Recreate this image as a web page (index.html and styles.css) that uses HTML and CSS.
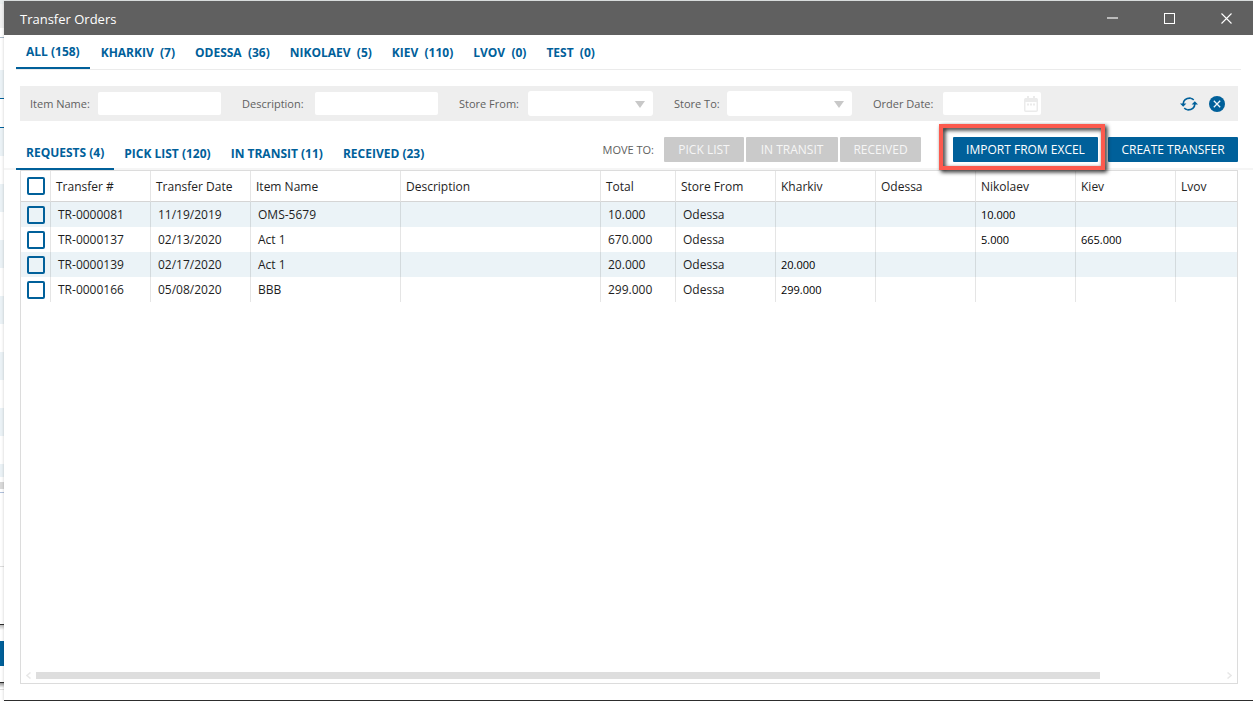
FILE: index.html
```html
<!DOCTYPE html>
<html lang="en">
<head>
<meta charset="utf-8">
<title>Transfer Orders</title>
<link rel="stylesheet" href="styles.css">
</head>
<body>
<main class="window">
  <header class="titlebar">
    <h1 class="title">Transfer Orders</h1>
    <div class="window-controls">
      <button class="control" aria-label="Minimize"><svg width="11" height="11" viewBox="0 0 11 11"><path d="M0 5H11" stroke="#bbb" stroke-width="2"/></svg></button>
      <button class="control" aria-label="Maximize"><svg width="11" height="11" viewBox="0 0 11 11"><rect x=".5" y=".5" width="10" height="10" fill="none" stroke="#fff"/></svg></button>
      <button class="control" aria-label="Close"><svg width="11" height="11" viewBox="0 0 11 11"><path d="M.5.5l10 10M10.500.5l-10 10" stroke="#fff" stroke-width="1.100"/></svg></button>
    </div>
  </header>

  <nav class="tabs store-tabs" aria-label="Stores">
    <a class="tab active" href="#all">ALL (158)</a>
    <a class="tab" href="#kharkiv">KHARKIV  (7)</a>
    <a class="tab" href="#odessa">ODESSA  (36)</a>
    <a class="tab" href="#nikolaev">NIKOLAEV  (5)</a>
    <a class="tab" href="#kiev">KIEV  (110)</a>
    <a class="tab" href="#lvov">LVOV  (0)</a>
    <a class="tab" href="#test">TEST  (0)</a>
  </nav>

  <form class="filters">
    <div class="field"><label class="label-item" for="item">Item Name:</label><input class="box" id="item" type="text"></div>
    <div class="field"><label class="label-desc" for="desc">Description:</label><input class="box" id="desc" type="text"></div>
    <div class="field"><label class="label-from" for="from">Store From:</label>
      <span class="picker"><select class="box select" id="from"><option></option></select><svg class="arrow" width="10" height="7" viewBox="0 0 10 7"><path d="M0 0H10L5 7Z" fill="#c8c8c8"/></svg></span></div>
    <div class="field"><label class="label-to" for="to">Store To:</label>
      <span class="picker"><select class="box select" id="to"><option></option></select><svg class="arrow" width="10" height="7" viewBox="0 0 10 7"><path d="M0 0H10L5 7Z" fill="#c8c8c8"/></svg></span></div>
    <div class="field"><label class="label-date" for="date">Order Date:</label>
      <span class="picker"><input class="box date" id="date" type="text"><svg class="calendar" width="14" height="16" viewBox="0 0 14 16"><path d="M1 2h12v4H1zM3 0h2v3H3zM9 0h2v3H9z" fill="#ebebeb"/><rect x=".75" y="2.750" width="12.500" height="12.500" rx="1" fill="none" stroke="#ebebeb" stroke-width="1.500"/><path d="M3 7.500h2v2H3zM6 7.500h2v2H6zM9 7.500h2v2H9z" fill="#ebebeb"/></svg></span></div>
    <div class="filter-actions">
      <button class="icon-button" type="button" aria-label="Refresh"><svg width="18" height="16" viewBox="0 0 18 16"><path d="M3.200 8C3.200 4.300 6 1.900 10.500 2.100M14.800 8C14.800 11.700 12 14.100 7.500 13.900" fill="none" stroke="#00609a" stroke-width="1.700"/><path d="M10.300 2.200Q12.800 2.600 13.700 4M7.700 13.800Q5.200 13.400 4.300 12" fill="none" stroke="#00609a" stroke-width="1.400"/><path d="M0 7.500H6.400L3.200 10.800ZM11.600 8.500H18L14.800 5.200Z" fill="#00609a"/></svg></button>
      <button class="icon-button" type="button" aria-label="Clear filters"><svg width="16" height="16" viewBox="0 0 16 16"><circle cx="8" cy="8" r="8" fill="#00609a"/><path d="M4.800 4.800l6.400 6.400M11.200 4.800l-6.400 6.400" stroke="#eef6fa" stroke-width="1.300"/></svg></button>
    </div>
  </form>

  <section class="toolbar">
    <nav class="tabs" aria-label="Status">
      <a class="tab active" href="#requests">REQUESTS (4)</a>
      <a class="tab" href="#picklist">PICK LIST (120)</a>
      <a class="tab" href="#transit">IN TRANSIT (11)</a>
      <a class="tab" href="#received">RECEIVED (23)</a>
    </nav>
    <div class="actions">
      <span class="move-label">MOVE TO:</span>
      <div class="move-buttons">
        <button class="button disabled pick" disabled>PICK LIST</button>
        <button class="button disabled transit" disabled>IN TRANSIT</button>
        <button class="button disabled received" disabled>RECEIVED</button>
      </div>
      <div class="main-buttons">
        <div class="marked"><button class="button import">IMPORT FROM EXCEL</button></div>
        <button class="button create">CREATE TRANSFER</button>
      </div>
    </div>
  </section>

  <section class="grid">
    <table class="orders">
      <colgroup><col class="c-check"><col class="c-m"><col class="c-m"><col class="c-item"><col class="c-desc"><col class="c-total"><col class="c-m"><col class="c-m"><col class="c-m"><col class="c-m"><col class="c-m"><col></colgroup>
      <thead>
        <tr><th><input class="check" type="checkbox" aria-label="Select all"></th><th>Transfer #</th><th>Transfer Date</th><th>Item Name</th><th>Description</th><th>Total</th><th>Store From</th><th>Kharkiv</th><th>Odessa</th><th>Nikolaev</th><th>Kiev</th><th>Lvov</th></tr>
      </thead>
      <tbody>
        <tr><td><input class="check" type="checkbox" aria-label="Select TR-0000081"></td><td>TR-0000081</td><td>11/19/2019</td><td>OMS-5679</td><td></td><td>10.000</td><td>Odessa</td><td class="qty"></td><td class="qty"></td><td class="qty">10.000</td><td class="qty"></td><td class="qty"></td></tr>
        <tr><td><input class="check" type="checkbox" aria-label="Select TR-0000137"></td><td>TR-0000137</td><td>02/13/2020</td><td>Act 1</td><td></td><td>670.000</td><td>Odessa</td><td class="qty"></td><td class="qty"></td><td class="qty">5.000</td><td class="qty">665.000</td><td class="qty"></td></tr>
        <tr><td><input class="check" type="checkbox" aria-label="Select TR-0000139"></td><td>TR-0000139</td><td>02/17/2020</td><td>Act 1</td><td></td><td>20.000</td><td>Odessa</td><td class="qty">20.000</td><td class="qty"></td><td class="qty"></td><td class="qty"></td><td class="qty"></td></tr>
        <tr><td><input class="check" type="checkbox" aria-label="Select TR-0000166"></td><td>TR-0000166</td><td>05/08/2020</td><td>BBB</td><td></td><td>299.000</td><td>Odessa</td><td class="qty">299.000</td><td class="qty"></td><td class="qty"></td><td class="qty"></td><td class="qty"></td></tr>
      </tbody>
    </table>
    <div class="scrollbar">
      <svg width="5" height="7" viewBox="0 0 5 7"><path d="M4.500.5L1 3.500L4.500 6.500" fill="none" stroke="#e8e8e8" stroke-width="1.500"/></svg>
      <div class="track"><div class="thumb"></div></div>
      <svg width="5" height="7" viewBox="0 0 5 7"><path d="M.5.5L4 3.500L.5 6.500" fill="none" stroke="#e8e8e8" stroke-width="1.500"/></svg>
    </div>
  </section>
</main>
</body>
</html>
```
FILE: styles.css
```css
* { box-sizing: border-box; }

body {
  margin: 0;
  min-height: 100vh;
  display: flex;
  padding: 1px 0 0 4px;
  font: 12px/16px "Open Sans", "Noto Sans", sans-serif;
  color: #1e1e1e;
  /* the page behind the window, seen along its left and top edges */
  background: linear-gradient(
    #eaeeee 4px, #f1f1f1 4px 28px, #fff 28px 37px, #a9b9c9 37px 38px,
    #fff 38px 70px, #ebf2f6 70px 98px, #00609a 98px 99px, #fff 99px 127px,
    #00609a 127px 128px, #ebf2f6 128px 156px, #fff 156px 184px,
    #ebf2f6 184px 212px, #fff 212px 240px, #ebf2f6 240px 268px,
    #fff 268px 296px, #ebf2f6 296px 324px, #fff 324px 352px,
    #ebf2f6 352px 380px, #fff 380px 408px, #ebf2f6 408px 436px,
    #fff 436px 464px, #ebf2f6 464px 477px, #fff 477px 482px,
    #d9d9d9 482px 489px, #fff 489px 492px, #b0c0dc 492px 493px,
    #fff 493px 566px, #ddd 566px 567px, #fff 567px 624px,
    #2d2d2d 624px 625px, #bbb 625px, #fff 630px 641px,
    #00609a 641px 666px, #fff 666px 682px, #2d2d2d 682px 683px,
    #999 683px, #fff 688px 689px, #ddd 689px 690px, #fff 690px);
}

.window {
  flex: 1;
  min-width: 0;
  display: flex;
  flex-direction: column;
  background: #fff;
  border-bottom: 1px solid #2d2d2d;
  box-shadow: 0 0 3px rgba(0, 0, 0, .2);
}

.titlebar {
  display: flex;
  justify-content: space-between;
  align-items: center;
  height: 34px;
  padding: 0 20px 0 16px;
  background: #606060;
  color: #fff;
}
.title { margin: 0; padding-top: 2px; font-size: 13px; font-weight: 400; }
.window-controls { display: flex; gap: 44px; }
.control, .icon-button {
  display: flex;
  padding: 0;
  border: 0;
  background: none;
}
.control { padding: 1px; }

.tabs { display: flex; white-space: pre; font-weight: 700; }
.tab {
  height: 34px;
  padding: 10px 10px 0;
  color: #00609a;
  text-decoration: none;
}
.tab.active { padding-top: 9px; border-bottom: 2px solid #00609a; }
.store-tabs { margin: 0 12px; border-bottom: 1px solid #ebebeb; }
.store-tabs .active { margin-right: 1px; }

.filters {
  display: flex;
  align-items: center;
  gap: 21px;
  height: 35px;
  margin: 16px 15px 0 16px;
  padding: 0 13px 0 10px;
  background: #eee;
  color: #606060;
  font-size: 11px;
}
.field { display: flex; align-items: center; }
.label-item { width: 68px; }
.label-desc { width: 73px; }
.label-from { width: 69px; }
.label-to { width: 53px; }
.label-date { width: 70px; }
.box {
  width: 123px;
  height: 23px;
  padding: 0 4px;
  border: 0;
  border-radius: 2px;
  background: #fff;
  font: inherit;
}
.picker { position: relative; display: flex; }
.select { width: 125px; height: 25px; border-radius: 3px; appearance: none; }
.date { width: 98px; }
.arrow { position: absolute; right: 8px; top: 10px; pointer-events: none; }
.calendar { position: absolute; right: 3px; top: 4px; }
.filter-actions { display: flex; align-items: center; gap: 11px; margin-left: auto; }

.toolbar {
  display: flex;
  justify-content: space-between;
  margin-top: 15px;
  padding: 0 15px 0 12px;
  border-bottom: 2px solid #f5f5f5;
}
.toolbar .tabs { margin-bottom: -2px; }
.actions { display: flex; align-items: flex-start; padding-top: 1px; }
.move-label { margin-right: 10px; padding-top: 5px; color: #606060; font-size: 11px; }
.move-buttons { display: flex; gap: 2px; }
.main-buttons { display: flex; gap: 10px; margin-left: 32px; }
.button {
  height: 25px;
  padding: 0;
  border: 0;
  border-radius: 1px;
  background: #00609a;
  color: #fff;
  font: inherit;
}
.button.disabled { background: #cacaca; color: #f6f6f6; }
.pick { width: 80px; }
.transit { width: 92px; }
.received { width: 81px; }
.import { width: 145px; }
.create { width: 130px; }

/* highlight frame drawn over the toolbar */
.marked { position: relative; }
.marked::after {
  content: "";
  position: absolute;
  inset: -13px -7px -8px -14px;
  border: 4px solid #fc5a4e;
  filter: drop-shadow(2px 2px 2px #111);
  pointer-events: none;
}

.grid {
  flex: 1;
  display: flex;
  flex-direction: column;
  justify-content: space-between;
  margin: 0 15px 16px 16px;
  border: 1px solid #dcdcdc;
}
.orders { width: 100%; table-layout: fixed; border-collapse: separate; border-spacing: 0; }
.c-check { width: 30px; }
.c-m { width: 100px; }
.c-item { width: 150px; }
.c-desc { width: 200px; }
.c-total { width: 75px; }
.orders th {
  height: 31px;
  padding: 2px 5px 0;
  border-bottom: 1px solid #d5d5d5;
  font-weight: 400;
  text-align: left;
}
.orders td { height: 25px; padding: 0 7px; }
.orders td.qty { padding: 0 5px; color: #000; font-size: 11px; }
.orders th:not(:last-child), .orders td:not(:last-child) { border-right: 1px solid rgba(0, 0, 0, .1); }
.orders th:first-child, .orders td:first-child { padding: 0 0 0 6px; }
.orders tbody tr:nth-child(odd) { background: #ebf3f7; }
.check {
  display: block;
  width: 18px;
  height: 18px;
  margin: 0;
  appearance: none;
  border: 2px solid #00609a;
  border-radius: 2px;
}
.check:checked { background: #00609a; }

.scrollbar { display: flex; align-items: center; gap: 5px; padding: 0 5px 4px; }
.track { flex: 1; }
.thumb { width: 89.7%; height: 7px; background: #dedede; }
```
